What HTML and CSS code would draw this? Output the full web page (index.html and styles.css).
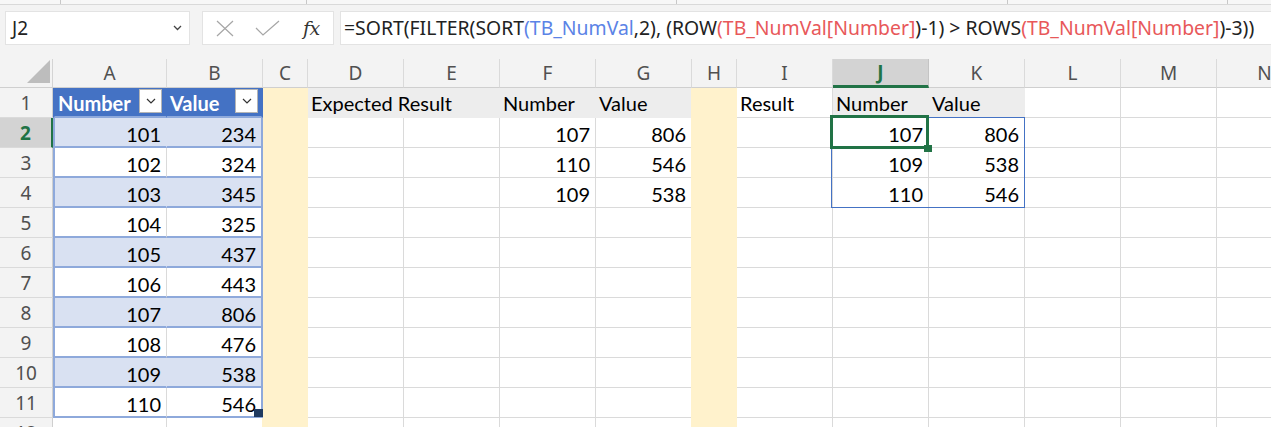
FILE: index.html
```html
<!DOCTYPE html>
<html>
<head>
<meta charset="utf-8">
<link rel="stylesheet" href="styles.css">
</head>
<body>
<div class="ribbon-edge">
  <span class="tick t1"></span><span class="tick t2"></span><span class="tick t3"></span><span class="tick t4"></span><span class="tick t5"></span>
</div>
<div class="formula-row">
  <div class="namebox">
    <span class="ref">J2</span>
    <svg class="nb-chev" width="9" height="6" viewBox="0 0 9 6"><polyline points="1,1 4.5,4.5 8,1" fill="none" stroke="#444" stroke-width="1.3"/></svg>
  </div>
  <div class="fxbox">
    <svg class="ico-x" width="18" height="17" viewBox="0 0 18 17"><path d="M1 1 L17 16 M17 1 L1 16" stroke="#a6a6a6" stroke-width="1.2" fill="none"/></svg>
    <svg class="ico-check" width="25" height="16" viewBox="0 0 25 16"><polyline points="1,8 8,15 24,1" stroke="#a6a6a6" stroke-width="1.2" fill="none"/></svg>
    <span class="fx">fx</span>
  </div>
  <div class="formula">=SORT(FILTER(SORT<span class="fb">(TB_NumVal</span>,2), (ROW<span class="fr">(TB_NumVal[Number]</span>)-1) &gt; ROWS<span class="fr">(TB_NumVal[Number]</span>)-3))</div>
</div>

<div class="sheet">
  <!-- column headers -->
  <div class="corner"><svg class="tri" width="24" height="24" viewBox="0 0 24 24"><polygon points="23,1 23,24 0,24" fill="#bdbdbd"/></svg></div>
  <div class="ch">A</div><div class="ch">B</div><div class="ch">C</div><div class="ch">D</div><div class="ch">E</div><div class="ch">F</div><div class="ch">G</div><div class="ch">H</div><div class="ch">I</div><div class="ch sel">J</div><div class="ch">K</div><div class="ch">L</div><div class="ch">M</div><div class="ch">N</div>

  <!-- row 1 -->
  <div class="rh">1</div>
  <div class="c th ta"><span>Number</span><span class="filt"><svg width="10" height="6" viewBox="0 0 10 6"><polyline points="1,1 5,5 9,1" fill="none" stroke="#333" stroke-width="1.2"/></svg></span></div>
  <div class="c th tbr"><span>Value</span><span class="filt"><svg width="10" height="6" viewBox="0 0 10 6"><polyline points="1,1 5,5 9,1" fill="none" stroke="#333" stroke-width="1.2"/></svg></span></div>
  <div class="c y"></div>
  <div class="c g span2">Expected Result</div>
  <div class="c g">Number</div>
  <div class="c g">Value</div>
  <div class="c y ys"></div>
  <div class="c">Result</div>
  <div class="c g">Number</div>
  <div class="c g">Value</div>
  <div class="c"></div><div class="c"></div><div class="c"></div>

  <!-- row 2 -->
  <div class="rh sel">2</div>
  <div class="c n ta bd">101</div><div class="c n tbr bd">234</div>
  <div class="c y"></div><div class="c"></div><div class="c"></div>
  <div class="c n">107</div><div class="c n">806</div>
  <div class="c y ys"></div><div class="c"></div>
  <div class="c n active">107<span class="spill"></span><span class="selbox"></span><span class="handle"></span></div><div class="c n">806</div>
  <div class="c"></div><div class="c"></div><div class="c"></div>

  <!-- row 3 -->
  <div class="rh">3</div>
  <div class="c n ta">102</div><div class="c n tbr">324</div>
  <div class="c y"></div><div class="c"></div><div class="c"></div>
  <div class="c n">110</div><div class="c n">546</div>
  <div class="c y ys"></div><div class="c"></div>
  <div class="c n">109</div><div class="c n">538</div>
  <div class="c"></div><div class="c"></div><div class="c"></div>

  <!-- row 4 -->
  <div class="rh">4</div>
  <div class="c n ta bd">103</div><div class="c n tbr bd">345</div>
  <div class="c y"></div><div class="c"></div><div class="c"></div>
  <div class="c n">109</div><div class="c n">538</div>
  <div class="c y ys"></div><div class="c"></div>
  <div class="c n">110</div><div class="c n">546</div>
  <div class="c"></div><div class="c"></div><div class="c"></div>

  <!-- row 5 -->
  <div class="rh">5</div>
  <div class="c n ta">104</div><div class="c n tbr">325</div>
  <div class="c y"></div><div class="c"></div><div class="c"></div><div class="c"></div><div class="c"></div>
  <div class="c y ys"></div><div class="c"></div><div class="c"></div><div class="c"></div><div class="c"></div><div class="c"></div><div class="c"></div>

  <!-- row 6 -->
  <div class="rh">6</div>
  <div class="c n ta bd">105</div><div class="c n tbr bd">437</div>
  <div class="c y"></div><div class="c"></div><div class="c"></div><div class="c"></div><div class="c"></div>
  <div class="c y ys"></div><div class="c"></div><div class="c"></div><div class="c"></div><div class="c"></div><div class="c"></div><div class="c"></div>

  <!-- row 7 -->
  <div class="rh">7</div>
  <div class="c n ta">106</div><div class="c n tbr">443</div>
  <div class="c y"></div><div class="c"></div><div class="c"></div><div class="c"></div><div class="c"></div>
  <div class="c y ys"></div><div class="c"></div><div class="c"></div><div class="c"></div><div class="c"></div><div class="c"></div><div class="c"></div>

  <!-- row 8 -->
  <div class="rh">8</div>
  <div class="c n ta bd">107</div><div class="c n tbr bd">806</div>
  <div class="c y"></div><div class="c"></div><div class="c"></div><div class="c"></div><div class="c"></div>
  <div class="c y ys"></div><div class="c"></div><div class="c"></div><div class="c"></div><div class="c"></div><div class="c"></div><div class="c"></div>

  <!-- row 9 -->
  <div class="rh">9</div>
  <div class="c n ta">108</div><div class="c n tbr">476</div>
  <div class="c y"></div><div class="c"></div><div class="c"></div><div class="c"></div><div class="c"></div>
  <div class="c y ys"></div><div class="c"></div><div class="c"></div><div class="c"></div><div class="c"></div><div class="c"></div><div class="c"></div>

  <!-- row 10 -->
  <div class="rh">10</div>
  <div class="c n ta bd">109</div><div class="c n tbr bd">538</div>
  <div class="c y"></div><div class="c"></div><div class="c"></div><div class="c"></div><div class="c"></div>
  <div class="c y ys"></div><div class="c"></div><div class="c"></div><div class="c"></div><div class="c"></div><div class="c"></div><div class="c"></div>

  <!-- row 11 -->
  <div class="rh">11</div>
  <div class="c n ta">110</div><div class="c n tbr lastb">546<span class="resize"></span></div>
  <div class="c y"></div><div class="c"></div><div class="c"></div><div class="c"></div><div class="c"></div>
  <div class="c y ys"></div><div class="c"></div><div class="c"></div><div class="c"></div><div class="c"></div><div class="c"></div><div class="c"></div>

  <!-- row 12 -->
  <div class="rh">12</div>
  <div class="c"></div><div class="c"></div>
  <div class="c y ys"></div><div class="c"></div><div class="c"></div><div class="c"></div><div class="c"></div>
  <div class="c y ys"></div><div class="c"></div><div class="c"></div><div class="c"></div><div class="c"></div><div class="c"></div><div class="c"></div>
</div>
</body>
</html>
```

FILE: styles.css
```css
html, body {
  margin: 0;
  padding: 0;
}
body {
  width: 1271px;
  height: 427px;
  overflow: hidden;
  background: #f3f3f3;
  font-family: "Noto Sans", "Open Sans", sans-serif;
  color: #222;
}

/* ribbon remnant strip */
.ribbon-edge {
  height: 4px;
  border-bottom: 1px solid #d9d9d9;
  background: #f7f7f7;
  display: flex;
  align-items: flex-start;
}
.tick {
  width: 1px;
  height: 4px;
  background: #c8c8c8;
}
.t1 { margin-left: 60px; }
.t2 { margin-left: 245px; }
.t3 { margin-left: 369px; }
.t4 { margin-left: 330px; }
.t5 { margin-left: 219px; }

/* formula row */
.formula-row {
  display: flex;
  padding: 6px 0 0 5px;
  height: 34px;
}
.namebox {
  width: 185px;
  height: 34px;
  box-sizing: border-box;
  background: #fff;
  border: 1px solid #e3e3e3;
  display: flex;
  align-items: center;
  justify-content: space-between;
  padding: 0 7px 0 6px;
  font-size: 19px;
}
.namebox .ref {
  color: #222;
}
.fxbox {
  margin-left: 12px;
  width: 132px;
  height: 34px;
  box-sizing: border-box;
  background: #fff;
  border: 1px solid #e3e3e3;
  display: flex;
  align-items: center;
  padding-left: 13px;
}
.ico-check {
  margin-left: 21px;
}
.fx {
  margin-left: 23px;
  font-family: "DejaVu Serif", "Liberation Serif", serif;
  font-style: italic;
  font-size: 19px;
  color: #333;
  letter-spacing: -0.5px;
}
.formula {
  margin-left: 6px;
  flex: 1;
  height: 34px;
  box-sizing: border-box;
  background: #fff;
  border: 1px solid #e3e3e3;
  border-right: none;
  font-size: 19.4px;
  line-height: 32px;
  padding-left: 3px;
  white-space: nowrap;
  overflow: hidden;
  color: #222;
}
.fb { color: #5b83e6; }
.fr { color: #e8585a; }

/* sheet grid */
.sheet {
  margin-top: 14px;
  display: grid;
  grid-template-columns: 53px 114px 96px 45px 96px 96px 96px 96px 45px 96px 96px 96px 96px 96px 96px;
  grid-template-rows: 29px repeat(12, 30px);
  width: 1313px;
}
.corner {
  background: #f3f3f3;
  border-right: 1px solid #d4d4d4;
  border-bottom: 1px solid #cfcfcf;
  position: relative;
}
.tri {
  position: absolute;
  left: 27px;
  top: 0;
}
.ch {
  background: #f3f3f3;
  border-right: 1px solid #dadada;
  border-bottom: 1px solid #cfcfcf;
  box-sizing: border-box;
  display: flex;
  align-items: center;
  justify-content: center;
  font-size: 19px;
  color: #505050;
}
.ch.sel {
  background: #d3d3d3;
  color: #217346;
  font-weight: 700;
  border-bottom: 3px solid #217346;
  border-right-color: #c4c4c4;
}
.rh {
  background: #f3f3f3;
  border-right: 1px solid #cfcfcf;
  border-bottom: 1px solid #dadada;
  box-sizing: border-box;
  display: flex;
  align-items: center;
  justify-content: center;
  font-size: 19px;
  color: #505050;
}
.rh.sel {
  background: #d3d3d3;
  color: #217346;
  font-weight: 700;
  border-right: 2px solid #217346;
}

.c {
  box-sizing: border-box;
  border-right: 1px solid #dadada;
  border-bottom: 1px solid #dadada;
  background: #fff;
  font-family: "Lato", "Liberation Sans", sans-serif;
  font-size: 20px;
  line-height: 27px;
  padding: 2px 3px 0 3px;
  white-space: nowrap;
  overflow: visible;
  color: #000;
}
.c.n {
  text-align: right;
  padding-right: 5px;
  padding-top: 3px;
}
.c.span2 {
  grid-column: span 2;
}
.c.y {
  background: #fff2cc;
  border-color: #fff2cc;
}
.c.ys {
  box-shadow: -1px 0 0 #fff2cc;
}
.c.g {
  background: #ededed;
  border-color: #ededed;
}

/* Excel table A1:B11 */
.c.th {
  background: #4472c4;
  border-color: #4472c4;
  border-bottom: 1px solid #8ea9db;
  color: #fff;
  font-weight: 700;
  display: flex;
  justify-content: space-between;
  align-items: flex-start;
  padding-top: 2px;
}
.c.th.ta {
  border-left: 2px solid #4472c4;
  padding-left: 3px;
  padding-right: 4px;
}
.c.th.tbr {
  border-right: 2px solid #4472c4;
  padding-right: 3px;
}
.filt {
  width: 23px;
  height: 24px;
  box-sizing: border-box;
  margin-top: -1px;
  background: #fff;
  border: 1px solid #b5b5b5;
  display: flex;
  align-items: center;
  justify-content: center;
}
.c.ta {
  border-left: 2px solid #8ea9db;
  border-bottom: 2px solid #8ea9db;
}
.c.tbr {
  border-right: 2px solid #8ea9db;
  border-bottom: 2px solid #8ea9db;
}
.c.bd {
  background: #d9e1f2;
}
.c.ta.bd {
  border-right-color: #d9e1f2;
}
.c.lastb {
  position: relative;
}
.resize {
  position: absolute;
  right: -2px;
  bottom: -1px;
  width: 9px;
  height: 8px;
  background: #1f3a60;
}

/* active cell J2 and spill range */
.c.active {
  position: relative;
}
.spill {
  position: absolute;
  left: -2px;
  top: -1px;
  width: 194px;
  height: 91px;
  box-sizing: border-box;
  border: 1px solid #4472c4;
}
.selbox {
  position: absolute;
  left: -3px;
  top: -3px;
  width: 99px;
  height: 34px;
  box-sizing: border-box;
  border: 3px solid #217346;
}
.handle {
  position: absolute;
  left: 91px;
  top: 27px;
  width: 8px;
  height: 7px;
  background: #217346;
}
```
